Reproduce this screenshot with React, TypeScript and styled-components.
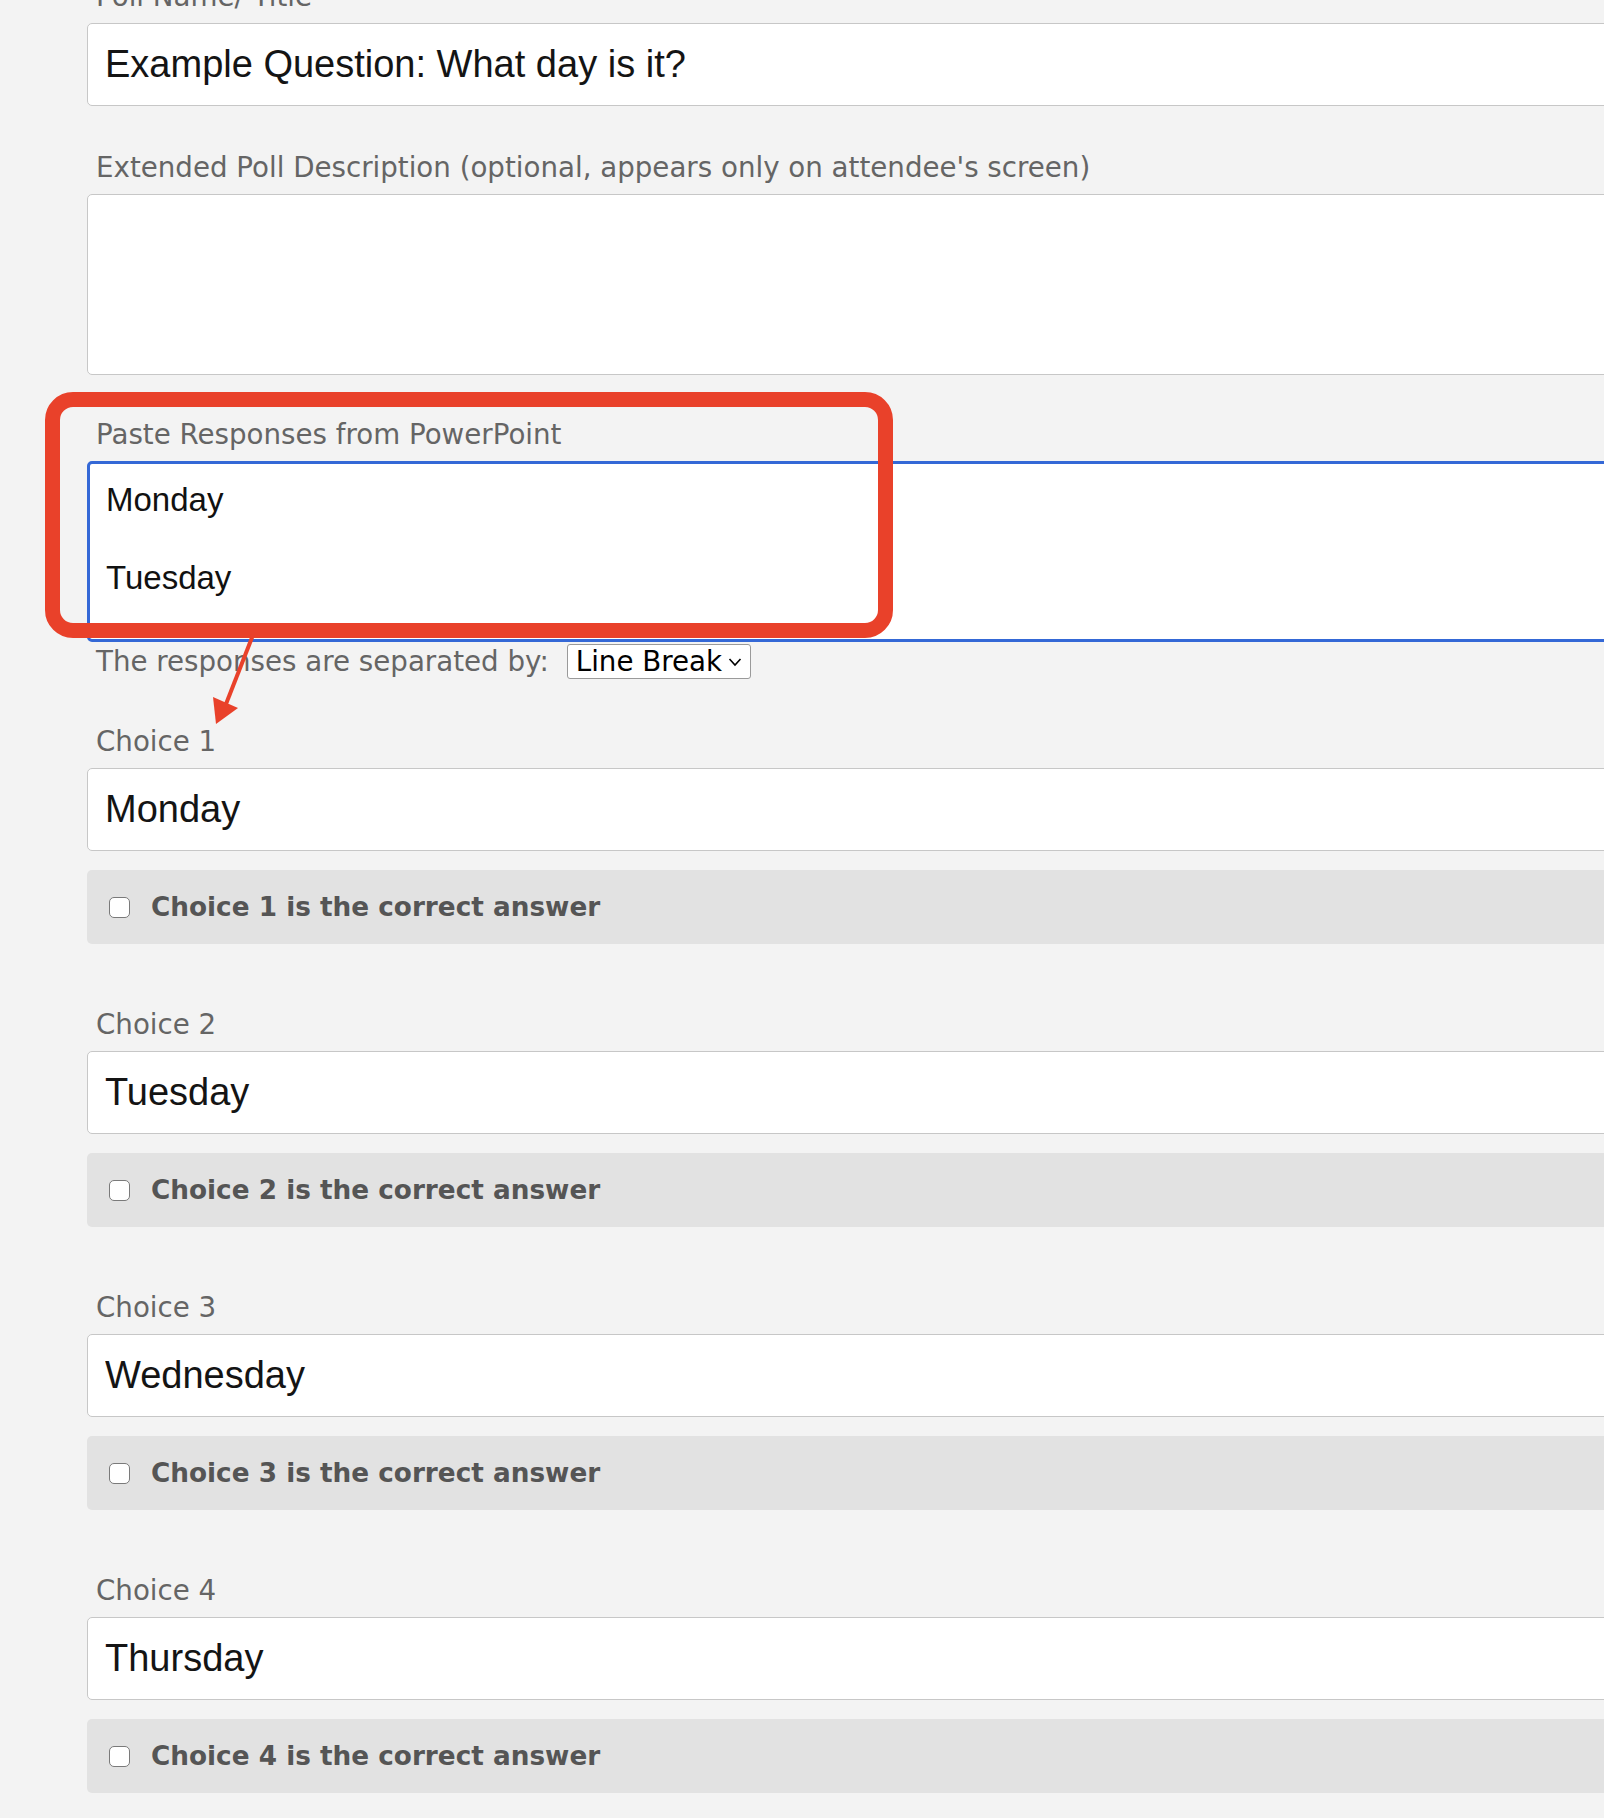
import React, { FC } from 'react';
import styled, { createGlobalStyle } from 'styled-components';

const GlobalStyle = createGlobalStyle`
  html, body {
    margin: 0;
    padding: 0;
    background: #f3f3f3;
    overflow: hidden;
  }
`;

const Page = styled.div`
  width: 1900px;
  margin-top: -20px;
  padding-left: 87px;
  box-sizing: border-box;
`;

const Field = styled.div<{ $gap?: number }>`
  position: relative;
  margin-bottom: ${({ $gap }) => ($gap ?? 45)}px;
`;

const Label = styled.div`
  font-family: "DejaVu Sans", "Noto Sans", sans-serif;
  font-size: 27.7px;
  line-height: 34px;
  color: #656565;
  padding-left: 9px;
  margin-bottom: 9px;
  white-space: nowrap;
`;

const TextInput = styled.input`
  display: block;
  width: 100%;
  height: 83px;
  box-sizing: border-box;
  padding: 0 17px;
  border: 1px solid #c7c7c7;
  border-radius: 5px;
  background: #fff;
  font-family: "Liberation Sans", Arial, sans-serif;
  font-size: 38px;
  color: #141414;
  outline: none;
`;

const TextArea = styled.textarea<{ $focused?: boolean }>`
  display: block;
  width: 100%;
  height: 181px;
  box-sizing: border-box;
  padding: 16px 16px;
  border: ${({ $focused }) => ($focused ? '3px solid #3468d6' : '1px solid #c7c7c7')};
  border-radius: 5px;
  background: #fff;
  font-family: "Liberation Sans", Arial, sans-serif;
  font-size: 33px;
  line-height: 39px;
  color: #111;
  resize: none;
  outline: none;
`;

const SeparatorRow = styled.div`
  display: flex;
  align-items: center;
  gap: 18px;
  height: 35px;
  margin-top: 2px;
  padding-left: 9px;
  font-family: "DejaVu Sans", "Noto Sans", sans-serif;
  font-size: 27.7px;
  color: #656565;
`;

const SelectBox = styled.div`
  display: flex;
  align-items: center;
  gap: 6px;
  height: 35px;
  box-sizing: border-box;
  padding: 0 8px 0 8px;
  border: 1px solid #9a9a9a;
  border-radius: 3px;
  background: #fff;
  color: #000;
  font-family: "DejaVu Sans", "Noto Sans", sans-serif;
  font-size: 27.7px;
  line-height: 33px;
`;

const CorrectBar = styled.label`
  display: flex;
  align-items: center;
  gap: 21px;
  height: 74px;
  margin-top: 19px;
  padding-left: 22px;
  background: #e2e2e2;
  border-radius: 5px;
  font-family: "DejaVu Sans", "Noto Sans", sans-serif;
  font-weight: bold;
  font-size: 26.3px;
  color: #555;
`;

const Checkbox = styled.span`
  width: 21px;
  height: 21px;
  box-sizing: border-box;
  border: 1.5px solid #7a7a7a;
  border-radius: 5px;
  background: #fff;
  flex: none;
`;

const Callout = styled.div`
  position: absolute;
  left: -42px;
  top: -26px;
  width: 848px;
  height: 246px;
  box-sizing: border-box;
  border: 15px solid #e9412a;
  border-radius: 28px;
  pointer-events: none;
`;

const Arrow = styled.svg`
  position: absolute;
  left: 100px;
  top: 200px;
  width: 80px;
  height: 120px;
  pointer-events: none;
`;

const choices = ['Monday', 'Tuesday', 'Wednesday', 'Thursday'];

const Chevron: FC = () => (
  <svg width="14" height="10" viewBox="0 0 14 10">
    <path d="M1.5 2 L7 8 L12.5 2" fill="none" stroke="#000" strokeWidth="1.6" />
  </svg>
);

const App: FC = () => (
  <>
    <GlobalStyle />
    <Page>
      <Field>
        <Label>Poll Name/ Title</Label>
        <TextInput defaultValue="Example Question: What day is it?" />
      </Field>

      <Field $gap={43}>
        <Label>Extended Poll Description (optional, appears only on attendee&apos;s screen)</Label>
        <TextArea />
      </Field>

      <Field $gap={46}>
        <Label>Paste Responses from PowerPoint</Label>
        <TextArea $focused defaultValue={'Monday\n\nTuesday'} />
        <SeparatorRow>
          <span>The responses are separated by:</span>
          <SelectBox>
            Line Break
            <Chevron />
          </SelectBox>
        </SeparatorRow>
        <Callout />
        <Arrow viewBox="0 0 80 120">
          <line x1="66" y1="17" x2="39" y2="86" stroke="#e9412a" strokeWidth="4" />
          <polygon points="29,106 26,79 51,90" fill="#e9412a" />
        </Arrow>
      </Field>

      {choices.map((choice, i) => (
        <Field key={choice} $gap={64}>
          <Label>{`Choice ${i + 1}`}</Label>
          <TextInput defaultValue={choice} />
          <CorrectBar>
            <Checkbox />
            {`Choice ${i + 1} is the correct answer`}
          </CorrectBar>
        </Field>
      ))}
    </Page>
  </>
);

export default App;
